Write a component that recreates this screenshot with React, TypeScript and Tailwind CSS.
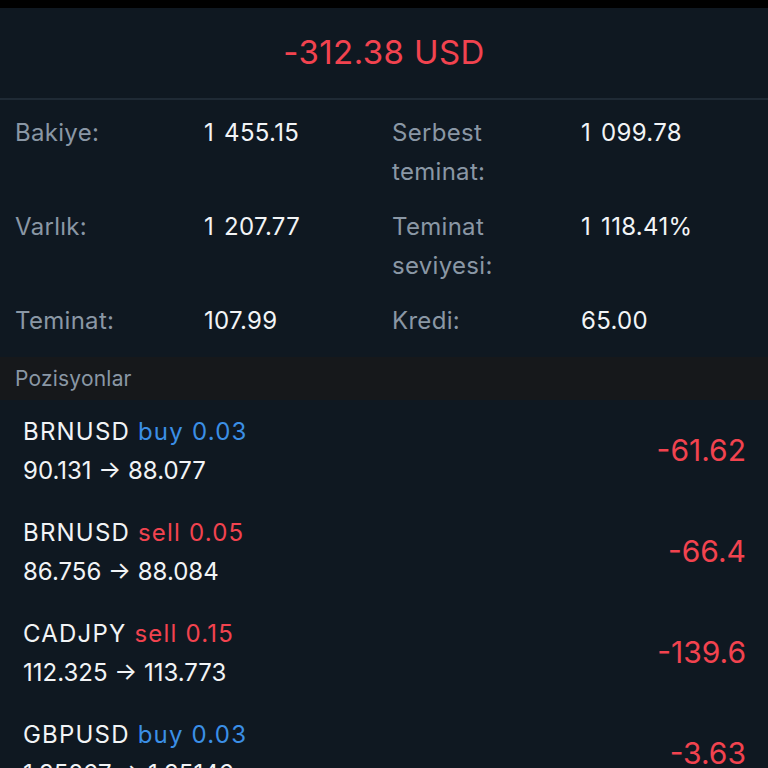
import React from "react";

const stats: [string, string, string, string][] = [
  ["Bakiye:", "1 455.15", "Serbest teminat:", "1 099.78"],
  ["Varlık:", "1 207.77", "Teminat seviyesi:", "1 118.41%"],
  ["Teminat:", "107.99", "Kredi:", "65.00"],
];

const positions = [
  { sym: "BRNUSD", side: "buy", vol: "0.03", from: "90.131", to: "88.077", pl: "-61.62" },
  { sym: "BRNUSD", side: "sell", vol: "0.05", from: "86.756", to: "88.084", pl: "-66.4" },
  { sym: "CADJPY", side: "sell", vol: "0.15", from: "112.325", to: "113.773", pl: "-139.6" },
  { sym: "GBPUSD", side: "buy", vol: "0.03", from: "1.35267", to: "1.35146", pl: "-3.63" },
];

export default function App() {
  return (
    <div
      className="w-[768px] h-[768px] overflow-hidden bg-[#0f1821] flex flex-col"
      style={{ fontFamily: "Inter, 'Noto Sans', sans-serif" }}
    >
      <div className="h-[8px] bg-black shrink-0" />
      <div className="h-[90px] flex items-center justify-center text-[33px] tracking-[0.4px] text-[#f2434f] shrink-0">
        -312.38 USD
      </div>
      <div className="h-[2px] bg-[#1f2a35] shrink-0" />
      <div className="pl-[15px] pt-[13px] pb-[17px] flex flex-col gap-[16px] text-[24px] leading-[39px] tracking-[0.3px] shrink-0">
        {stats.map((r, i) => (
          <div key={i} className="grid grid-cols-[189px_188px_189px_1fr]">
            <div className="text-[#8a97a5]">{r[0]}</div>
            <div className="text-[#f2f4f6] [word-spacing:3px]">{r[1]}</div>
            <div className="text-[#8a97a5] pr-[40px]">{r[2]}</div>
            <div className="text-[#f2f4f6] [word-spacing:3px]">{r[3]}</div>
          </div>
        ))}
      </div>
      <div className="h-[43px] bg-[#16181b] flex items-center pl-[15px] text-[21px] tracking-[0.2px] text-[#8a97a5] shrink-0">
        Pozisyonlar
      </div>
      <div className="flex flex-col">
        {positions.map((p, i) => (
          <div key={i} className="h-[101px] shrink-0 flex items-center justify-between pl-[23px] pr-[22px]">
            <div className="flex flex-col text-[24px] leading-[39px]">
              <div className="text-[#f2f4f6] tracking-[1.2px]">
                {p.sym}{" "}
                <span className={p.side === "buy" ? "text-[#3b8fe6]" : "text-[#f2434f]"}>
                  {p.side} {p.vol}
                </span>
              </div>
              <div className="text-[#f2f4f6]">
                {p.from} → {p.to}
              </div>
            </div>
            <div className="text-[30px] text-[#f2434f]">{p.pl}</div>
          </div>
        ))}
      </div>
    </div>
  );
}
